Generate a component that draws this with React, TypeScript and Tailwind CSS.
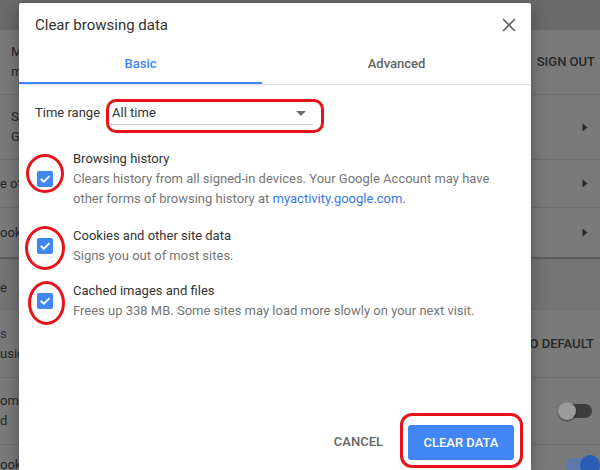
import type { ReactNode } from "react";

const CheckBox = () => (
  <span className="flex h-[16px] w-[16px] items-center justify-center rounded-[2px] bg-[#4285f4]">
    <svg width="12" height="12" viewBox="0 0 12 12" fill="none">
      <path d="M2.2 6.3l2.6 2.5L9.9 3.6" stroke="#fff" strokeWidth="1.9" strokeLinecap="round" strokeLinejoin="round" />
    </svg>
  </span>
);

const Arrow = () => (
  <svg width="6" height="9" viewBox="0 0 6 9" className="mr-[12px]">
    <path d="M0.5 0.5L5.5 4.5L0.5 8.5Z" fill="#2a2a2a" />
  </svg>
);

interface RowProps {
  left: ReactNode;
  right?: ReactNode;
  className: string;
}

function BgRow({ left, right, className }: RowProps) {
  return (
    <div className={`flex items-center justify-between border-b border-[#6e6e6e] ${className}`}>
      <div className="text-[13px] leading-[20px] text-[#262626]">{left}</div>
      {right}
    </div>
  );
}

interface ItemProps {
  title: string;
  children: ReactNode;
  ring: string;
  className: string;
}

function Item({ title, children, ring, className }: ItemProps) {
  return (
    <div className={`flex items-center gap-[20px] pl-[2px] ${className}`}>
      <div className="relative shrink-0">
        <CheckBox />
        <span className={`absolute rounded-[50%] border-[3px] border-[#e8121c] ${ring}`} />
      </div>
      <div className="text-[13px] leading-[20px]">
        <div className="text-[#333333]">{title}</div>
        <div className="text-[#767676]">{children}</div>
      </div>
    </div>
  );
}

export default function App() {
  return (
    <div className="relative h-[470px] w-[600px] overflow-hidden bg-[#7a7a7a] font-['Roboto','Liberation_Sans',sans-serif]">
      {/* settings page behind the scrim */}
      <div className="flex flex-col">
        <div className="h-[30px] bg-[#6a6a6a]" />
        <BgRow
          className="h-[65px]"
          left={
            <div className="pl-[11px]">
              <div>Michael</div>
              <div>michael@gmail.com</div>
            </div>
          }
          right={<span className="pr-[5px] text-[13px] font-medium text-[#262626]">SIGN OUT</span>}
        />
        <BgRow
          className="h-[65px]"
          left={
            <div className="pl-[11px]">
              <div>Sync</div>
              <div>Google services</div>
            </div>
          }
          right={<Arrow />}
        />
        <BgRow className="h-[48px]" left={<div>e other people</div>} right={<Arrow />} />
        <BgRow className="h-[49px] border-b-0" left={<div>ookmarks and settings</div>} right={<Arrow />} />
        <div className="h-[2px] bg-[#5c5c5c]" />
        <BgRow className="h-[51px] bg-[#747474]" left={<div className="pt-[8px]">e</div>} />
        <BgRow
          className="h-[68px]"
          left={
            <div>
              <div className="text-[#2a3550]">s</div>
              <div>usic</div>
            </div>
          }
          right={<span className="pr-[6px] text-[13px] font-medium text-[#262626]">O DEFAULT</span>}
        />
        <BgRow
          className="h-[67px]"
          left={
            <div>
              <div>ome</div>
              <div>d</div>
            </div>
          }
          right={
            <span className="relative mr-[8px] flex h-[14px] w-[30px] items-center rounded-full bg-[#3d3d3d]">
              <span className="absolute -left-[4px] h-[18px] w-[18px] rounded-full bg-[#9c9c9c] shadow-[0_1px_2px_rgba(0,0,0,0.5)]" />
            </span>
          }
        />
        <BgRow
          className="h-[40px] border-b-0"
          left={<div>ook</div>}
          right={
            <span className="relative mr-[4px] flex h-[14px] w-[30px] items-center rounded-full bg-[#5b79ad]">
              <span className="absolute -right-[4px] h-[20px] w-[20px] rounded-full bg-[#2a5cb4]" />
            </span>
          }
        />
      </div>

      {/* dialog */}
      <div className="absolute left-[19px] top-[3px] flex h-[467px] w-[512px] flex-col rounded-t-[2px] bg-white shadow-[0_4px_16px_rgba(0,0,0,0.35)]">
        <div className="flex items-center justify-between pl-[16px] pr-[15px] pt-[12px] pb-[10px]">
          <span className="text-[15px] leading-[20px] text-[#333333]">Clear browsing data</span>
          <svg width="14" height="14" viewBox="0 0 14 14">
            <path d="M1 1L13 13M13 1L1 13" stroke="#666666" strokeWidth="1.7" />
          </svg>
        </div>

        <div className="flex border-b border-[#e0e0e0]">
          <div className="flex h-[39px] w-[243px] items-center justify-center border-b-2 border-[#4285f4] text-[13px] font-medium text-[#4285f4]">
            Basic
          </div>
          <div className="flex h-[39px] flex-1 items-center justify-center pb-[2px] text-[13px] font-medium text-[#646464]">
            Advanced
          </div>
        </div>

        <div className="px-[16px]">
          <div className="mt-[14px] flex items-center gap-[6px]">
            <span className="mb-[6px] text-[13px] leading-[20px] text-[#333333]">Time range</span>
            <div className="h-[34px] w-[218px] rounded-[10px] border-[3px] border-[#e8121c] pl-[1px]">
              <div className="flex h-[23px] w-[203px] items-center justify-between border-b border-[#cfcfcf] pl-[2px] pr-[7px]">
                <span className="text-[13px] text-[#333333]">All time</span>
                <svg width="10" height="5" viewBox="0 0 10 5">
                  <path d="M0 0H10L5 5Z" fill="#6e6e6e" />
                </svg>
              </div>
            </div>
          </div>

          <Item title="Browsing history" ring="-left-[11px] -top-[17px] h-[39px] w-[38px]" className="mt-[16px]">
            Clears history from all signed-in devices. Your Google Account may have
            <br />
            other forms of browsing history at <span className="text-[#3b78e7]">myactivity.google.com</span>.
          </Item>
          <Item title="Cookies and other site data" ring="-left-[12px] -top-[12px] h-[44px] w-[40px]" className="mt-[17px]">
            Signs you out of most sites.
          </Item>
          <Item title="Cached images and files" ring="-left-[9px] -top-[12px] h-[44px] w-[37px]" className="mt-[15px]">
            Frees up 338 MB. Some sites may load more slowly on your next visit.
          </Item>
        </div>

        <div className="mt-auto flex items-end justify-end pr-[8px] pb-[2px]">
          <button type="button" className="mb-[8px] flex h-[36px] items-center px-[16px] text-[13px] font-medium text-[#646464]">
            CANCEL
          </button>
          <div className="ml-[1px] rounded-[12px] border-[3px] border-[#e8121c] pl-[5px] pr-[6px] pt-[9px] pb-[5px]">
            <button
              type="button"
              className="flex h-[35px] w-[106px] items-center justify-center rounded-[3px] bg-[#4285f4] text-[13px] font-medium text-white"
            >
              CLEAR DATA
            </button>
          </div>
        </div>
      </div>
    </div>
  );
}
